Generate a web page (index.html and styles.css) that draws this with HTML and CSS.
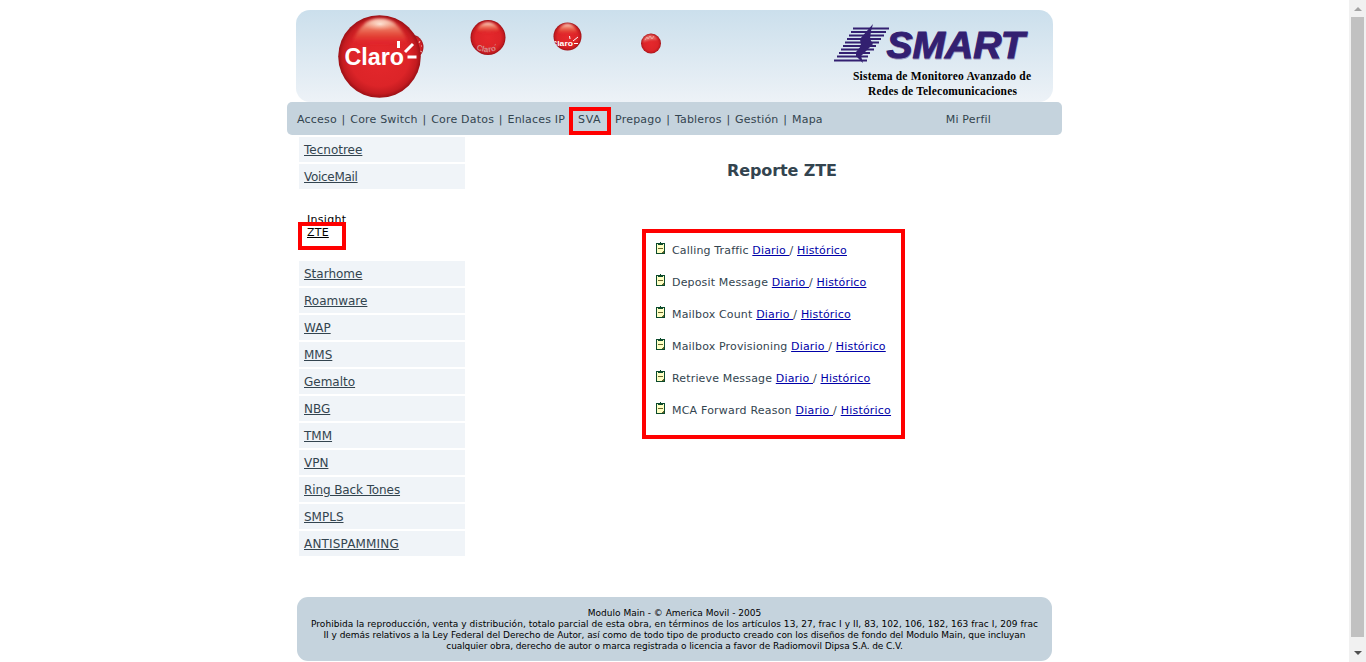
FILE: index.html
```html
<!DOCTYPE html>
<html lang="es">
<head>
<meta charset="utf-8">
<title>SMART - Reporte ZTE</title>
<link rel="stylesheet" href="styles.css">
</head>
<body>
<div class="page">
  <header class="banner">
    <svg class="banner-art" width="757" height="92" viewBox="0 0 757 92">
      <defs>
        <radialGradient id="ball" cx="50%" cy="50%" r="50%">
          <stop offset="0" stop-color="#e5282c"/><stop offset=".72" stop-color="#dc2428"/><stop offset=".9" stop-color="#c41b20"/><stop offset="1" stop-color="#9c1015"/>
        </radialGradient>
        <linearGradient id="shine" x1="0" y1="0" x2="0" y2="1">
          <stop offset="0" stop-color="#fff0e2" stop-opacity=".95"/><stop offset=".3" stop-color="#f5a283" stop-opacity=".8"/><stop offset=".65" stop-color="#e75a40" stop-opacity=".65"/><stop offset="1" stop-color="#e01828" stop-opacity=".5"/>
        </linearGradient>
        <radialGradient id="glow"><stop offset="0" stop-color="#fff5e9"/><stop offset="1" stop-color="#f8b090" stop-opacity="0"/></radialGradient>
        <filter id="soft"><feGaussianBlur stdDeviation="1.8"/></filter>
        <filter id="softer"><feGaussianBlur stdDeviation=".8"/></filter>
        <clipPath id="third"><circle cx="271.500" cy="26.500" r="14"/></clipPath>
      </defs>
      <circle cx="115" cy="37" r="12.5" fill="url(#ball)"/>
      <path d="M124 31l-1 2M125 36h1M124 41l2 1" stroke="#f3b8b4" stroke-width="1"/>
      <circle cx="83.500" cy="46.500" r="41.300" fill="url(#ball)"/>
      <path d="M57 31C62 17 71 9 84 9s22 8 27 22c-10 3-41 4-54 0z" fill="url(#shine)" filter="url(#soft)"/>
      <ellipse cx="84" cy="14" rx="17" ry="7" fill="url(#glow)" opacity=".8"/>
      <text class="claro" x="48.500" y="55" textLength="59.500" lengthAdjust="spacingAndGlyphs">Claro</text>
      <path d="M102.500 38v-7M109 42l8-8M111.500 47h9" stroke="#fff" stroke-width="3"/>

      <circle cx="192" cy="27.500" r="17.500" fill="url(#ball)"/>
      <path d="M181 20C184 10 200 10 203 20c-6 4-16 4-22 0z" fill="url(#shine)" filter="url(#softer)"/>
      <path id="arc" d="M180 39Q193 46 206 37" fill="none"/>
      <text class="ball-name faded"><textPath href="#arc" textLength="24">Claro´</textPath></text>

      <circle cx="271.500" cy="26.500" r="14" fill="url(#ball)"/>
      <path d="M262 22C265 11 278 11 281 22c-6 3-14 3-19 0z" fill="url(#shine)" filter="url(#softer)"/>
      <g clip-path="url(#third)">
        <text class="ball-name white" x="255" y="36" textLength="22" lengthAdjust="spacingAndGlyphs">Claro</text>
        <path d="M274 29l-.5-3M277 31l5-4M278 33.500h4" stroke="#fff" stroke-width="1"/>
      </g>

      <circle cx="355" cy="33.500" r="10" fill="url(#ball)"/>
      <path d="M347 32C348 23 359 23 361 30c-5-1-9 0-14 2z" fill="#ee9f91" opacity=".65" filter="url(#softer)"/>
      <path d="M349 30l2-3 1 2 2-3 2 3 2-3" stroke="#f7cfc8" fill="none" stroke-width=".8" opacity=".7"/>

      <path d="M557 18.500h36M555 22h35M553 25.500h35M551 29h34M549 32.500h34M547 36h33M545 39.500h33M543 43h31M541 46.500h31M538 50.500h33" stroke="#332071" stroke-width="1.900" fill="none"/>
      <path d="M577 14L570 22 564 29 565 36 560 42 560 46 567 53 565 46 572 39 577 34 574 29 575 21z" fill="#332071"/>
      <text class="smart shadow" x="591" y="49" textLength="138" lengthAdjust="spacingAndGlyphs">SMART</text>
      <text class="smart" x="590.500" y="48.300" textLength="138" lengthAdjust="spacingAndGlyphs">SMART</text>
      <text class="tagline" x="557" y="69.500" textLength="178">Sistema de Monitoreo Avanzado de</text>
      <text class="tagline" x="572" y="84.500" textLength="149">Redes de Telecomunicaciones</text>
    </svg>
  </header>

  <nav class="menu">
    <span>Acceso</span><i>|</i><span>Core Switch</span><i>|</i><span>Core Datos</span><i>|</i><span>Enlaces IP</span>
    <span class="sva">SVA</span>
    <span>Prepago</span><i>|</i><span>Tableros</span><i>|</i><span>Gestión</span><i>|</i><span>Mapa</span>
    <span class="profile">Mi Perfil</span>
  </nav>

  <div class="content">
    <aside class="side">
      <a><span>Tecnotree</span></a>
      <a class="narrow"><span>VoiceMail</span></a>
      <div class="sub"><div class="insight">Insight</div><div class="zte"><u>ZTE</u></div></div>
      <a><span>Starhome</span></a>
      <a><span>Roamware</span></a>
      <a><span>WAP</span></a>
      <a><span>MMS</span></a>
      <a><span>Gemalto</span></a>
      <a><span>NBG</span></a>
      <a><span>TMM</span></a>
      <a><span>VPN</span></a>
      <a class="snug"><span>Ring Back Tones</span></a>
      <a><span>SMPLS</span></a>
      <a class="caps"><span>ANTISPAMMING</span></a>
    </aside>
    <main class="report">
      <svg width="0" height="0" class="defs"><symbol id="note" viewBox="0 0 9 12"><path d="M0 1h9v11H0z" fill="#0b4a2b"/><path d="M1 3h7v8H1z" fill="#ffffc4"/><path d="M4 0h1v1H4zM2 2h5v1H2z" fill="#0b4a2b"/><path d="M1 2h1v1H1zM7 2h1v1H7z" fill="#ffffc4"/><path d="M2 6h5v1H2zM6 10h1V9h1v2H6z" fill="#66662c"/></symbol></svg>
      <h1>Reporte ZTE</h1>
      <ul class="list">
        <li><svg class="note"><use href="#note"/></svg><span>Calling Traffic <u>Diario </u>/ <u>Histórico</u></span></li>
        <li><svg class="note"><use href="#note"/></svg><span>Deposit Message <u>Diario </u>/ <u>Histórico</u></span></li>
        <li><svg class="note"><use href="#note"/></svg><span>Mailbox Count <u>Diario </u>/ <u>Histórico</u></span></li>
        <li><svg class="note"><use href="#note"/></svg><span>Mailbox Provisioning <u>Diario </u>/ <u>Histórico</u></span></li>
        <li><svg class="note"><use href="#note"/></svg><span>Retrieve Message <u>Diario </u>/ <u>Histórico</u></span></li>
        <li class="loose"><svg class="note"><use href="#note"/></svg><span>MCA Forward Reason <u>Diario </u>/ <u>Histórico</u></span></li>
      </ul>
    </main>
  </div>

  <footer class="legal">
    <div>Modulo Main - © America Movil - 2005</div>
    <div class="wide">Prohibida la reproducción, venta y distribución, totalo parcial de esta obra, en términos de los artículos 13, 27, frac I y II, 83, 102, 106, 182, 163 frac I, 209 frac</div>
    <div class="tight">II y demás relativos a la Ley Federal del Derecho de Autor, así como de todo tipo de producto creado con los diseños de fondo del Modulo Main, que incluyan</div>
    <div class="tighter">cualquier obra, derecho de autor o marca registrada o licencia a favor de Radiomovil Dipsa S.A. de C.V.</div>
  </footer>
</div>
<div class="scroll"><b class="up"></b><b class="thumb"></b><b class="down"></b></div>
</body>
</html>
```
FILE: styles.css
```css
*, *::after { box-sizing: border-box; }
body {
  margin: 0;
  height: 662px;
  overflow: hidden;
  display: flex;
  background: #fff;
  font-family: Verdana, "DejaVu Sans", sans-serif;
  color: #33444f;
}
.page { width: 775px; margin: 0 auto; padding-top: 10px; }
.banner {
  width: 757px;
  height: 92px;
  margin-left: 9px;
  border-radius: 14px;
  background: linear-gradient(#cbdfec, #edf2f7);
}
.banner-art { display: block; }
.claro { font: bold 23px "Liberation Sans", Arial, sans-serif; fill: #fff; }
.ball-name { font: bold 8px "Liberation Sans", Arial, sans-serif; }
.faded { fill: #d58c8c; }
.white { fill: #fff; }
.smart { font: italic bold 36px "Liberation Sans", Arial, sans-serif; fill: #332071; stroke: #332071; stroke-width: 1px; }
.shadow { fill: #8a84b0; stroke: #a09cc0; }
.tagline { font: bold 11.5px "Liberation Serif", "Times New Roman", serif; fill: #000; }

.menu {
  display: flex;
  align-items: center;
  height: 33px;
  padding: 2px 0 0 10px;
  border-radius: 5px;
  background: #c5d3dd;
  font-size: 11px;
  letter-spacing: .19px;
  white-space: nowrap;
}
.menu i { width: 13.5px; text-align: center; font-style: normal; }
.menu .sva {
  width: 42px;
  height: 28px;
  margin: 3px 4px 0;
  padding-left: 5px;
  border: 4px solid #f00;
  line-height: 17px;
  letter-spacing: .6px;
}
.menu .profile { margin-left: 123px; }

.content { display: flex; height: 462px; }
.side { width: 166px; margin: 2px 0 0 12px; }
.side a {
  display: block;
  height: 25px;
  margin-bottom: 2px;
  padding: 1px 0 0 5px;
  background: #f0f4f8;
  font-size: 12px;
  line-height: 25px;
}
.side .narrow { letter-spacing: -.3px; }
.side .snug { letter-spacing: -.1px; }
.side .caps { letter-spacing: .17px; }
.side a span, .side u { text-decoration: underline; text-underline-offset: 1px; }
.sub {
  position: relative;
  height: 70px;
  padding: 22px 0 0 8px;
  font-size: 11px;
  line-height: 13px;
  color: #000;
}
.insight { letter-spacing: .3px; }
.zte { letter-spacing: .2px; }
.zte::after {
  content: "";
  position: absolute;
  left: -1px;
  top: 31px;
  width: 48px;
  height: 28px;
  border: 4px solid #f00;
}

.report { width: 263px; margin-left: 177px; }
.defs { display: block; }
.report h1 {
  margin: 26px 0 0;
  padding-left: 85px;
  font-size: 16px;
  line-height: 20px;
  letter-spacing: -.1px;
  white-space: nowrap;
}
.list {
  height: 210px;
  margin: 48px 0 0;
  padding: 1px 0 0 10px;
  border: 4px solid #f00;
  list-style: none;
  font-size: 11px;
  letter-spacing: .16px;
}
.list .loose { letter-spacing: .21px; }
.list li { display: flex; align-items: center; height: 32px; white-space: nowrap; }
.note { width: 9px; height: 12px; margin: -4px 7px 0 0; shape-rendering: crispEdges; }
.list u { color: #0000a8; text-underline-offset: 1px; white-space: pre-wrap; }

.legal {
  width: 755px;
  height: 64px;
  margin-left: 10px;
  padding-top: 11px;
  border-radius: 11px;
  background: #c5d3dd;
  color: #000;
  font-size: 9px;
  line-height: 11px;
  text-align: center;
  white-space: nowrap;
}
.wide { letter-spacing: .05px; }
.tight { letter-spacing: -.045px; }
.tighter { letter-spacing: -.09px; }
.scroll {
  display: flex;
  flex-direction: column;
  align-items: center;
  width: 17px;
  height: 662px;
  background: #f1f1f1;
}
.up { border: 4px solid transparent; border-bottom-color: #a3a3a3; border-top: 0; margin-top: 7px; }
.thumb { width: 13px; height: 620px; margin-top: 6px; background: #c1c1c1; }
.down { border: 4px solid transparent; border-top-color: #505050; border-bottom: 0; margin-top: 14px; }
```
